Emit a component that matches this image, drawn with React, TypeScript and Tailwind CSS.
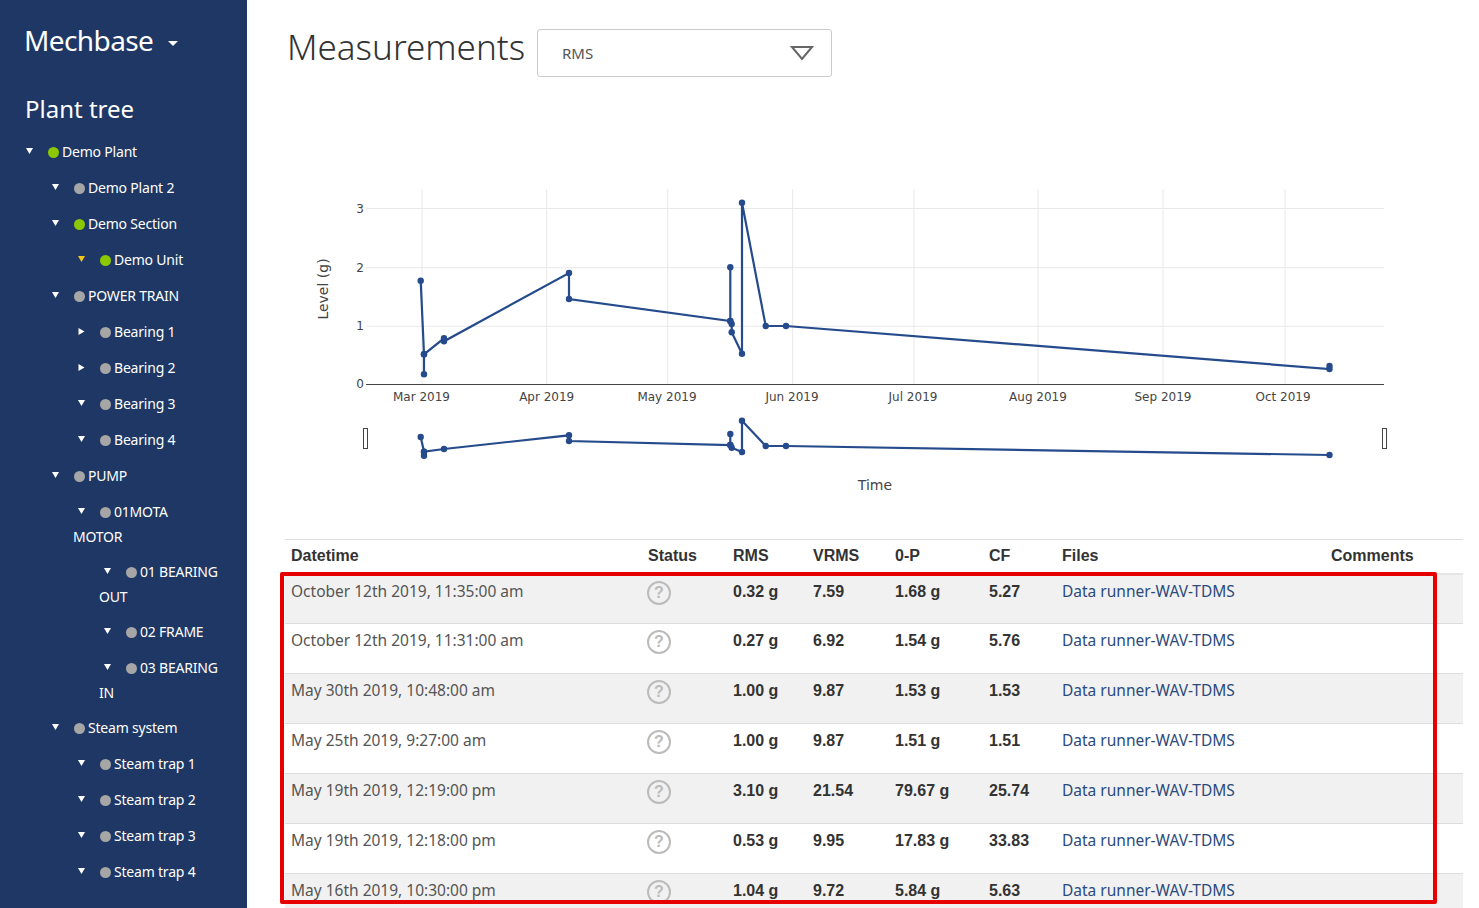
import React from "react";

// Sidebar tree rows
interface TreeRow {
  label: string;
  level: 0 | 1 | 2 | 3;
  ok?: boolean;
  arrow?: "down" | "right" | "warn";
  wrapped?: boolean;
}

const treeRows: TreeRow[] = [
  { label: "Demo Plant", level: 0, ok: true },
  { label: "Demo Plant 2", level: 1 },
  { label: "Demo Section", level: 1, ok: true },
  { label: "Demo Unit", level: 2, ok: true, arrow: "warn" },
  { label: "POWER TRAIN", level: 1 },
  { label: "Bearing 1", level: 2, arrow: "right" },
  { label: "Bearing 2", level: 2, arrow: "right" },
  { label: "Bearing 3", level: 2 },
  { label: "Bearing 4", level: 2 },
  { label: "PUMP", level: 1 },
  { label: "01MOTA MOTOR", level: 2, wrapped: true },
  { label: "01 BEARING OUT", level: 3, wrapped: true },
  { label: "02 FRAME", level: 3 },
  { label: "03 BEARING IN", level: 3, wrapped: true },
  { label: "Steam system", level: 1 },
  { label: "Steam trap 1", level: 2 },
  { label: "Steam trap 2", level: 2 },
  { label: "Steam trap 3", level: 2 },
  { label: "Steam trap 4", level: 2 },
];

const levelClass = ["pl-[21px]", "pl-[47px]", "pl-[73px]", "pl-[99px]"];

const measurements = [
  ["October 12th 2019, 11:35:00 am", "0.32 g", "7.59", "1.68 g", "5.27"],
  ["October 12th 2019, 11:31:00 am", "0.27 g", "6.92", "1.54 g", "5.76"],
  ["May 30th 2019, 10:48:00 am", "1.00 g", "9.87", "1.53 g", "1.53"],
  ["May 25th 2019, 9:27:00 am", "1.00 g", "9.87", "1.51 g", "1.51"],
  ["May 19th 2019, 12:19:00 pm", "3.10 g", "21.54", "79.67 g", "25.74"],
  ["May 19th 2019, 12:18:00 pm", "0.53 g", "9.95", "17.83 g", "33.83"],
  ["May 16th 2019, 10:30:00 pm", "1.04 g", "9.72", "5.84 g", "5.63"],
];

// Chart data, in page pixels (the svg viewBox matches the page)
const mainPoints = [
  [1329.5, 366], [1329.5, 369], [786, 326], [765.7, 326], [742, 202.7], [742, 353.7],
  [731.7, 332.3], [731.7, 324], [730.3, 321], [730.3, 267.3], [730.3, 321], [569, 299],
  [569, 273], [444, 341.3], [444, 338.3], [424, 354.3], [424, 374.3], [424, 354.3], [420.7, 280.7],
];
const rangePoints = [
  [1329.5, 455], [786, 446], [765.7, 446], [742, 420.7], [742, 452], [731.7, 447.7],
  [730.3, 445], [730.3, 434], [730.3, 445], [569, 441], [569, 435.3], [444, 449],
  [424, 451.7], [424, 455.7], [424, 451.7], [420.7, 437],
];
const monthTicks = [
  { x: 422, lx: 421.5, label: "Mar 2019" },
  { x: 546.7, lx: 546.7, label: "Apr 2019" },
  { x: 667.7, lx: 667, label: "May 2019" },
  { x: 792.7, lx: 792, label: "Jun 2019" },
  { x: 914, lx: 913, label: "Jul 2019" },
  { x: 1038, lx: 1038, label: "Aug 2019" },
  { x: 1163, lx: 1163, label: "Sep 2019" },
  { x: 1285, lx: 1283, label: "Oct 2019" },
];
const levelTicks = [
  { y: 326.3, label: "1" },
  { y: 267.7, label: "2" },
  { y: 208.5, label: "3" },
];

const toPath = (pts: number[][]) => pts.map((p) => p.join(",")).join(" ");

const Arrow: React.FC<{ kind?: TreeRow["arrow"] }> = ({ kind }) => (
  <svg viewBox="0 0 9 7" className="inline-block w-[9px] h-[7px] ml-[4px] align-[2px]">
    {kind === "right" ? (
      <polygon points="1.5,0 7.5,3.5 1.5,7" fill="#ffffff" />
    ) : (
      <polygon points="1,0 8,0 4.5,6" fill={kind === "warn" ? "#f5c518" : "#ffffff"} />
    )}
  </svg>
);

const Sidebar: React.FC = () => (
  <aside className="w-[247px] shrink-0 bg-[#1e3764] text-white font-['Noto_Sans',sans-serif]">
    <div className="pt-[20px] pl-6 flex items-center h-[60px]">
      <span className="text-[28px] leading-10 tracking-[-0.6px]">Mechbase</span>
      <svg viewBox="0 0 10 5" className="w-[10px] h-[5px] ml-[15px] mt-[6px]">
        <polygon points="0,0 10,0 5,5" fill="#ffffff" />
      </svg>
    </div>
    <h2 className="mt-[33px] pl-[25px] text-[24px] leading-8">Plant tree</h2>
    <ul className="mt-[14px]">
      {treeRows.map((row) => (
        <li
          key={row.label}
          className={`${levelClass[row.level]} pr-[28px] ${
            row.wrapped ? "mb-[10px]" : "mb-[11px]"
          } text-sm leading-[25px] tracking-[-0.2px]`}
        >
          <Arrow kind={row.arrow} />
          <span
            className={`inline-block w-[11px] h-[11px] rounded-full ml-[14px] mr-[3px] align-[-1px] ${
              row.ok ? "bg-[#8cc800]" : "bg-[#a6a6a6]"
            }`}
          />
          {row.label}
        </li>
      ))}
    </ul>
  </aside>
);

const Chart: React.FC = () => (
  <svg viewBox="285 77 1178 462" className="block w-[1178px] h-[462px] font-['DejaVu_Sans',sans-serif]">
    {monthTicks.map((t) => (
      <line key={t.label} x1={t.x} x2={t.x} y1={189} y2={384} stroke="#e8e8e8" />
    ))}
    {levelTicks.map((t) => (
      <line key={t.label} x1={366} x2={1384} y1={t.y} y2={t.y} stroke="#e8e8e8" />
    ))}
    <line x1={366} x2={1384} y1={384.5} y2={384.5} stroke="#444444" />
    {[{ y: 384.3, label: "0" }, ...levelTicks].map((t) => (
      <text key={t.label} x={364} y={t.y + 4} textAnchor="end" fontSize={12} fill="#444444">
        {t.label}
      </text>
    ))}
    {monthTicks.map((t) => (
      <text key={t.label} x={t.lx} y={400.5} textAnchor="middle" fontSize={12} fill="#444444">
        {t.label}
      </text>
    ))}
    <text
      transform="translate(328 289) rotate(-90)"
      textAnchor="middle"
      fontSize={14}
      fill="#444444"
    >
      Level (g)
    </text>
    <text x={875} y={490} textAnchor="middle" fontSize={14} fill="#444444">
      Time
    </text>

    <polyline points={toPath(mainPoints)} fill="none" stroke="#254b8c" strokeWidth={2.2} />
    {mainPoints.map(([x, y], i) => (
      <circle key={i} cx={x} cy={y} r={3.2} fill="#254b8c" />
    ))}
    <polyline points={toPath(rangePoints)} fill="none" stroke="#254b8c" strokeWidth={2.2} />
    {rangePoints.map(([x, y], i) => (
      <circle key={i} cx={x} cy={y} r={3.2} fill="#254b8c" />
    ))}
    <rect x={363.5} y={428.5} width={4} height={20} fill="#ffffff" stroke="#444444" />
    <rect x={1382.5} y={428.5} width={4} height={20} fill="#ffffff" stroke="#444444" />
  </svg>
);

const StatusIcon: React.FC = () => (
  <div className="ml-[-1px] mt-[2px] flex h-6 w-6 items-center justify-center rounded-full border-2 border-[#bbbbbb] font-['Liberation_Sans',sans-serif] text-base font-bold text-[#bbbbbb]">
    ?
  </div>
);

const MeasurementsTable: React.FC = () => {
  const head = "px-[6px] text-left font-bold";
  const num = "px-[6px] pt-[5px] font-['Liberation_Sans',sans-serif] text-base font-bold text-[#333333]";
  return (
    <table className="w-[1178px] table-fixed font-['Noto_Sans',sans-serif] text-[15.5px] leading-6">
      <colgroup>
        <col className="w-[357px]" />
        <col className="w-[85px]" />
        <col className="w-[80px]" />
        <col className="w-[82px]" />
        <col className="w-[94px]" />
        <col className="w-[73px]" />
        <col className="w-[269px]" />
        <col />
      </colgroup>
      <thead>
        <tr className="h-[34px] border-t border-b-2 border-t-[#dddddd] border-b-[#e5e5e5] font-['Liberation_Sans',sans-serif] text-base text-[#333333]">
          {["Datetime", "Status", "RMS", "VRMS", "0-P", "CF", "Files", "Comments"].map((h) => (
            <th key={h} className={head}>
              {h}
            </th>
          ))}
        </tr>
      </thead>
      <tbody>
        {measurements.map((m, i) => (
          <tr
            key={m[0]}
            className={`h-[50px] border-b border-[#dddddd] ${i % 2 === 0 ? "bg-[#f1f1f1]" : "bg-white"}`}
          >
            <td className="px-[6px] pt-[4px] align-top text-[#555555]">{m[0]}</td>
            <td className="px-[6px] pt-[4px] align-top">
              <StatusIcon />
            </td>
            <td className={`${num} align-top`}>{m[1]}</td>
            <td className={`${num} align-top`}>{m[2]}</td>
            <td className={`${num} align-top`}>{m[3]}</td>
            <td className={`${num} align-top`}>{m[4]}</td>
            <td className="px-[6px] pt-[4px] align-top text-[#2c4a7c]">Data runner-WAV-TDMS</td>
            <td />
          </tr>
        ))}
      </tbody>
    </table>
  );
};

export default function App() {
  return (
    <div className="flex h-screen overflow-hidden bg-white">
      <Sidebar />
      <main className="relative flex-1 pl-[38px] pt-[29px] overflow-hidden">
        <div className="flex items-center h-12">
          <h1 className="ml-[2px] mb-[12px] w-[250px] font-['Noto_Sans',sans-serif] text-[35px] font-light leading-10 text-[#333333]">
            Measurements
          </h1>
          <div className="flex h-12 w-[295px] items-center justify-between rounded-[3px] border border-[#cccccc] pl-6 pr-[17px] font-['Noto_Sans',sans-serif] text-[15px] text-[#555555]">
            RMS
            <svg viewBox="0 0 24 16" className="h-4 w-6">
              <polygon points="2,2 22,2 12,14" fill="none" stroke="#666666" strokeWidth={2} />
            </svg>
          </div>
        </div>
        <Chart />
        <MeasurementsTable />
        {/* Red highlight drawn over the table */}
        <div className="absolute left-[33px] top-[572px] h-[332px] w-[1157px] rounded-[2px] border-4 border-[#e60000]" />
      </main>
    </div>
  );
}
